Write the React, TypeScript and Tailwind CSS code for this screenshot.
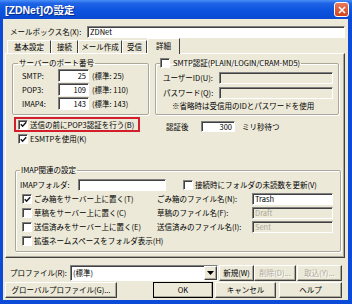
import React from "react";

// classic 3D edges used by the XP-era dialog
const sunken =
  "border border-t-[#808080] border-l-[#808080] border-b-white border-r-white shadow-[inset_1px_1px_0_#404040]";
const raised =
  "border border-t-white border-l-white border-b-[#404040] border-r-[#404040] shadow-[inset_-1px_-1px_0_#aca899]";

function Check({ on = false }: { on?: boolean }) {
  return (
    <span className={`w-[10px] h-[10px] bg-white shrink-0 flex items-center justify-center ${sunken}`}>
      {on && (
        <svg width="7" height="7" viewBox="0 0 7 7">
          <path d="M0.8 3.2 L2.6 5.2 L6.2 1.2" stroke="#1a1a1a" strokeWidth="1.5" fill="none" />
        </svg>
      )}
    </span>
  );
}

function Field({
  value = "",
  w,
  h = "h-[12px]",
  right = false,
  disabled = false,
}: {
  value?: string;
  w: string;
  h?: string;
  right?: boolean;
  disabled?: boolean;
}) {
  return (
    <div
      className={`${w} ${h} ${sunken} flex items-center px-[2px] shrink-0 ${
        disabled ? "bg-[#ece9d8] text-[#aca899]" : "bg-white text-black"
      } ${right ? "justify-end" : ""}`}>
      {value}
    </div>
  );
}

function Btn({
  label,
  w,
  disabled = false,
  def = false,
  className = "",
}: {
  label: string;
  w: string;
  disabled?: boolean;
  def?: boolean;
  className?: string;
}) {
  return (
    <div
      className={`${w} h-full shrink-0 ${def ? "outline outline-1 outline-black -outline-offset-1" : ""} ${className}`}>
      <div
        className={`w-full h-full bg-[#ece9d8] flex items-center justify-center ${raised} ${
          disabled ? "text-[#aca899] [text-shadow:1px_1px_0_#fff]" : ""
        }`}>
        {label}
      </div>
    </div>
  );
}

function Tab({ label, w, active = false }: { label: string; w: string; active?: boolean }) {
  return (
    <div
      className={`${w} flex items-center justify-center bg-[#ece9d8] border-l border-t border-l-white border-t-white border-r border-r-[#404040] ${
        active ? "h-[16px] -mb-px relative z-10 pb-[2px]" : "h-[13px]"
      }`}>
      {label}
    </div>
  );
}

export default function App() {
  return (
    <div className="w-[352px] h-[304px] bg-[#0b4bd8] flex flex-col font-['Noto_Sans_CJK_JP','Noto_Sans',sans-serif] text-[7.5px] leading-[10px] text-black overflow-hidden whitespace-nowrap">
      {/* title bar */}
      <div className="h-[19px] shrink-0 flex items-center pl-[5px] bg-[linear-gradient(to_bottom,#4a8ff7_0%,#1f64e6_18%,#0c53de_55%,#0a4ad2_100%)]">
        <span className="text-white font-bold text-[10.5px] leading-[12px] font-['Liberation_Sans','Noto_Sans_CJK_JP',sans-serif] [text-shadow:1px_1px_0_#0a2a8a]">
          [ZDNet]の設定
        </span>
        <div className="ml-auto mr-[3px] w-[15px] h-[15px] rounded-[3px] border border-white bg-[linear-gradient(to_bottom,#e87a5a,#d2431f)] flex items-center justify-center">
          <svg width="8" height="8" viewBox="0 0 8 8">
            <path d="M1 1 L7 7 M7 1 L1 7" stroke="#fff" strokeWidth="1.6" />
          </svg>
        </div>
      </div>

      {/* client area */}
      <div className="flex-1 ml-[3px] mr-[4px] mb-[4px] bg-[#ece9d8] flex flex-col">
        <div className="mt-[7px] h-[12px] flex items-center">
          <span className="w-[84px] pl-[7px] shrink-0">メールボックス名(X):</span>
          <Field value="ZDNet" w="flex-1" h="h-[12px]" />
          <span className="w-[3px]" />
        </div>

        {/* tabs */}
        <div className="h-[15px] ml-[4px] flex items-end">
          <Tab label="基本設定" w="w-[44px]" />
          <Tab label="接続" w="w-[27px]" />
          <Tab label="メール作成" w="w-[44px]" />
          <Tab label="受信" w="w-[25px]" />
          <Tab label="詳細" w="w-[33px]" active />
        </div>

        {/* tab panel */}
        <div className="ml-[2px] mr-[3px] h-[205px] border border-t-white border-l-white border-b-[#404040] border-r-[#404040] shadow-[inset_-1px_-1px_0_#aca899] flex flex-col">
          <div className="flex items-start pt-[4px]">
            <fieldset className="ml-[6px] w-[137px] border border-[#aca899] rounded-[2px] shadow-[inset_1px_1px_0_#fff,1px_1px_0_#fff]">
              <legend className="ml-[5px] px-[1px] leading-[10px]">サーバーのポート番号</legend>
              <div className="flex flex-col gap-[1px] pt-[1px] pb-[4px] pl-[9px]">
                {[
                  ["SMTP:", "25", "(標準: 25)"],
                  ["POP3:", "109", "(標準: 110)"],
                  ["IMAP4:", "143", "(標準: 143)"],
                ].map(([l, v, d]) => (
                  <div key={l} className="h-[13px] flex items-center">
                    <span className="w-[36px] shrink-0">{l}</span>
                    <Field value={v} w="w-[31px]" h="h-[13px]" right />
                    <span className="ml-[3px]">{d}</span>
                  </div>
                ))}
              </div>
            </fieldset>

            <fieldset className="ml-[6px] w-[184px] border border-[#aca899] rounded-[2px] shadow-[inset_1px_1px_0_#fff,1px_1px_0_#fff]">
              <legend className="ml-[4px] pr-[1px] leading-[10px]">
                <span className="flex items-center gap-[3px]">
                  <Check />
                  SMTP認証(PLAIN/LOGIN/CRAM-MD5)
                </span>
              </legend>
              <div className="flex flex-col pt-[4px] pb-[3px] pl-[7px]">
                <div className="h-[12px] flex items-center">
                  <span className="w-[56px] shrink-0">ユーザーID(U):</span>
                  <Field w="w-[114px]" disabled />
                </div>
                <div className="h-[12px] mt-[3px] flex items-center">
                  <span className="w-[56px] shrink-0">パスワード(Q):</span>
                  <Field w="w-[114px]" disabled />
                </div>
                <div className="mt-[2px] pl-[9px]">※省略時は受信用のIDとパスワードを使用</div>
              </div>
            </fieldset>
          </div>

          <div className="flex items-start">
            <div className="ml-[8px] mt-[2px] flex flex-col">
              <div className="w-[126px] h-[15px] border-2 border-[#d21f2b] flex items-center pl-[2px] gap-[2px]">
                <Check on />
                <span>送信の前にPOP3認証を行う(B)</span>
              </div>
              <div className="mt-[2px] h-[10px] pl-[4px] flex items-center gap-[2px]">
                <Check on />
                <span>ESMTPを使用(K)</span>
              </div>
            </div>
            <div className="ml-[26px] mt-[6px] h-[11px] flex items-center">
              <span className="w-[35px] shrink-0">認証後</span>
              <Field value="300" w="w-[34px]" h="h-[11px]" right />
              <span className="ml-[7px]">ミリ秒待つ</span>
            </div>
          </div>

          <fieldset className="mt-[21px] ml-[9px] w-[326px] border border-[#aca899] rounded-[2px] shadow-[inset_1px_1px_0_#fff,1px_1px_0_#fff]">
            <legend className="ml-[4px] px-[1px] leading-[10px]">IMAP関連の設定</legend>
            <div className="flex flex-col gap-[2px] pt-[4px] pb-[4px]">
              <div className="h-[12px] flex items-center pl-[4px]">
                <span className="w-[58px] shrink-0">IMAPフォルダ:</span>
                <Field w="w-[88px]" />
                <span className="ml-[17px] flex items-center gap-[2px]">
                  <Check />
                  接続時にフォルダの未読数を更新(V)
                </span>
              </div>
              {[
                { on: true, l: "ごみ箱をサーバー上に置く(T)", r: "ごみ箱のファイル名(N):", v: "Trash", d: false },
                { on: false, l: "草稿をサーバー上に置く(C)", r: "草稿のファイル名(F):", v: "Draft", d: true },
                { on: false, l: "送信済みをサーバー上に置く(E)", r: "送信済みのファイル名(I):", v: "Sent", d: true },
                { on: false, l: "拡張ネームスペースをフォルダ表示(H)", r: "", v: "", d: false },
              ].map((row) => (
                <div key={row.l} className="h-[12px] flex items-center">
                  <span className="w-[141px] shrink-0 pl-[6px] flex items-center gap-[1px]">
                    <Check on={row.on} />
                    <span className="ml-[1px]">{row.l}</span>
                  </span>
                  {row.r && (
                    <>
                      <span className="w-[95px] shrink-0">{row.r}</span>
                      <Field value={row.v} w="w-[81px]" disabled={row.d} />
                    </>
                  )}
                </div>
              ))}
            </div>
          </fieldset>
        </div>

        {/* profile row */}
        <div className="mt-[7px] h-[16px] flex items-center">
          <span className="w-[67px] pl-[7px] shrink-0">プロファイル(R):</span>
          <div className={`w-[148px] h-[16px] bg-white flex items-center ${sunken}`}>
            <span className="pl-[2px] flex-1">(標準)</span>
            <div className={`w-[13px] h-full flex items-center justify-center bg-[#ece9d8] ${raised}`}>
              <svg width="7" height="4" viewBox="0 0 7 4">
                <path d="M0 0 H7 L3.5 4 Z" fill="#000" />
              </svg>
            </div>
          </div>
          <Btn label="新規(W)" w="w-[35px]" className="ml-[1px]" />
          <Btn label="削除(D)..." w="w-[42px]" disabled />
          <Btn label="取込(Y)..." w="w-[45px]" className="ml-[1px]" disabled />
        </div>

        {/* dialog buttons */}
        <div className="mt-[1px] h-[16px] flex items-center">
          <Btn label="グローバルプロファイル(G)..." w="w-[112px]" className="ml-[2px]" />
          <Btn label="OK" w="w-[60px]" className="ml-[36px]" def />
          <Btn label="キャンセル" w="w-[61px]" className="ml-[2px]" />
          <Btn label="ヘルプ" w="w-[63px]" className="ml-[3px]" />
        </div>
      </div>
    </div>
  );
}
